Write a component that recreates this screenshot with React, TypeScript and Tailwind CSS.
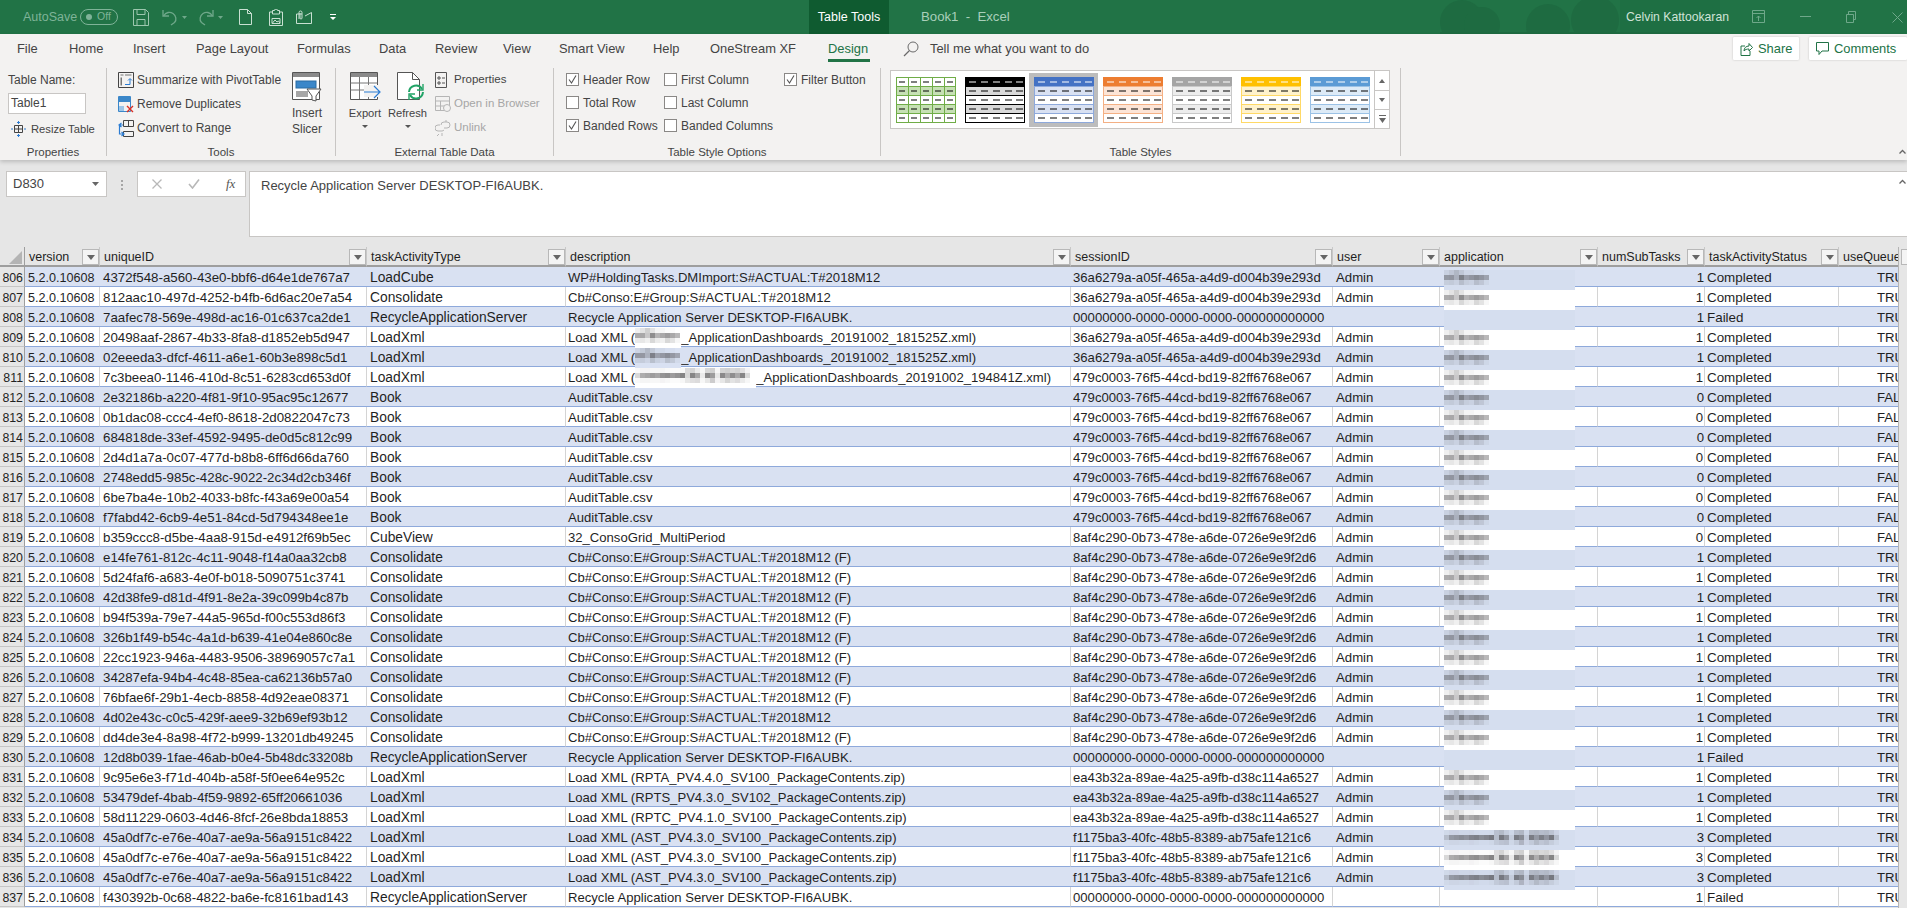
import React from "react";

const COLS = "grid grid-cols-[25px_75px_267px_199px_505px_262px_107px_158px_107px_134px_60px]";

type R = [number, string, string, string];
const RS = "RecycleApplicationServer";
const RD = "Recycle Application Server DESKTOP-FI6AUBK.";
const CF = "Cb#Conso:E#Group:S#ACTUAL:T#2018M12 (F)";
const CN = "Cb#Conso:E#Group:S#ACTUAL:T#2018M12";
const rows: R[] = [
  [806, "4372f548-a560-43e0-bbf6-d64e1de767a7", "LoadCube", "WP#HoldingTasks.DMImport:S#ACTUAL:T#2018M12"],
  [807, "812aac10-497d-4252-b4fb-6d6ac20e7a54", "Consolidate", CN],
  [808, "7aafec78-569e-498d-ac16-01c637ca2de1", RS, RD],
  [809, "20498aaf-2867-4b33-8fa8-d1852eb5d947", "LoadXml", "@S_ApplicationDashboards_20191002_181525Z.xml)"],
  [810, "02eeeda3-dfcf-4611-a6e1-60b3e898c5d1", "LoadXml", "@S_ApplicationDashboards_20191002_181525Z.xml)"],
  [811, "7c3beea0-1146-410d-8c51-6283cd653d0f", "LoadXml", "@L_ApplicationDashboards_20191002_194841Z.xml)"],
  [812, "2e32186b-a220-4f81-9f10-95ac95c12677", "Book", "AuditTable.csv"],
  [813, "0b1dac08-ccc4-4ef0-8618-2d0822047c73", "Book", "AuditTable.csv"],
  [814, "684818de-33ef-4592-9495-de0d5c812c99", "Book", "AuditTable.csv"],
  [815, "2d4d1a7a-0c07-477d-b8b8-6ff6d66da760", "Book", "AuditTable.csv"],
  [816, "2748edd5-985c-428c-9022-2c34d2cb346f", "Book", "AuditTable.csv"],
  [817, "6be7ba4e-10b2-4033-b8fc-f43a69e00a54", "Book", "AuditTable.csv"],
  [818, "f7fabd42-6cb9-4e51-84cd-5d794348ee1e", "Book", "AuditTable.csv"],
  [819, "b359ccc8-d5be-4aa8-915d-e4912f69b5ec", "CubeView", "32_ConsoGrid_MultiPeriod"],
  [820, "e14fe761-812c-4c11-9048-f14a0aa32cb8", "Consolidate", CF],
  [821, "5d24faf6-a683-4e0f-b018-5090751c3741", "Consolidate", CF],
  [822, "42d38fe9-d81d-4f91-8e2a-39c099b4c87b", "Consolidate", CF],
  [823, "b94f539a-79e7-44a5-965d-f00c553d86f3", "Consolidate", CF],
  [824, "326b1f49-b54c-4a1d-b639-41e04e860c8e", "Consolidate", CF],
  [825, "22cc1923-946a-4483-9506-38969057c7a1", "Consolidate", CF],
  [826, "34287efa-94b4-4c48-85ea-ca62136b57a0", "Consolidate", CF],
  [827, "76bfae6f-29b1-4ecb-8858-4d92eae08371", "Consolidate", CF],
  [828, "4d02e43c-c0c5-429f-aee9-32b69ef93b12", "Consolidate", CN],
  [829, "dd4de3e4-8a98-4f72-b999-13201db49245", "Consolidate", CF],
  [830, "12d8b039-1fae-46ab-b0e4-5b48dc33208b", RS, RD],
  [831, "9c95e6e3-f71d-404b-a58f-5f0ee64e952c", "LoadXml", "Load XML (RPTA_PV4.4.0_SV100_PackageContents.zip)"],
  [832, "53479def-4bab-4f59-9892-65ff20661036", "LoadXml", "Load XML (RPTS_PV4.3.0_SV102_PackageContents.zip)"],
  [833, "58d11229-0603-4d46-8fcf-26e8bda18853", "LoadXml", "Load XML (RPTC_PV4.1.0_SV100_PackageContents.zip)"],
  [834, "45a0df7c-e76e-40a7-ae9a-56a9151c8422", "LoadXml", "Load XML (AST_PV4.3.0_SV100_PackageContents.zip)"],
  [835, "45a0df7c-e76e-40a7-ae9a-56a9151c8422", "LoadXml", "Load XML (AST_PV4.3.0_SV100_PackageContents.zip)"],
  [836, "45a0df7c-e76e-40a7-ae9a-56a9151c8422", "LoadXml", "Load XML (AST_PV4.3.0_SV100_PackageContents.zip)"],
  [837, "f430392b-0c68-4822-ba6e-fc8161bad143", RS, RD],
];

function session(n: number) {
  if (n === 808 || n === 830 || n === 837) return "00000000-0000-0000-0000-000000000000";
  if (n <= 810) return "36a6279a-a05f-465a-a4d9-d004b39e293d";
  if (n <= 818) return "479c0003-76f5-44cd-bd19-82ff6768e067";
  if (n <= 829) return "8af4c290-0b73-478e-a6de-0726e9e9f2d6";
  if (n <= 833) return "ea43b32a-89ae-4a25-a9fb-d38c114a6527";
  return "f1175ba3-40fc-48b5-8389-ab75afe121c6";
}

const SHORT = [
  [0.08, 0.14, 0.24, 0.14, 0.05, 0.05, 0.02, 0.02, 0.0],
  [0.42, 0.44, 0.28, 0.58, 0.38, 0.44, 0.5, 0.44, 0.36],
  [0.1, 0.12, 0.08, 0.2, 0.1, 0.08, 0.2, 0.14, 0.04],
];
const LONG = [
  [0.03, 0.06, 0.06, 0.04, 0.04, 0.05, 0.03, 0.02, 0.02, 0.03, 0.18, 0.22, 0.1, 0.04, 0.2, 0.24, 0.04, 0.22, 0.24, 0.2, 0.22, 0.16, 0.06],
  [0.2, 0.42, 0.46, 0.5, 0.46, 0.55, 0.58, 0.5, 0.55, 0.62, 0.2, 0.62, 0.45, 0.1, 0.6, 0.5, 0.12, 0.6, 0.42, 0.58, 0.44, 0.62, 0.2],
  [0.03, 0.05, 0.05, 0.04, 0.04, 0.06, 0.04, 0.02, 0.02, 0.04, 0.12, 0.16, 0.18, 0.04, 0.12, 0.26, 0.06, 0.12, 0.22, 0.14, 0.18, 0.1, 0.04],
];

function Mosaic({ data }: { data: number[][] }) {
  const w = data[0].length * 5;
  return (
    <svg width={w} height={15} className="block">
      {data.map((r, y) =>
        r.map((o, x) => (
          <rect key={x + "-" + y} x={x * 5} y={y * 5} width={5} height={5} fill="#3c3a3c" fillOpacity={o} />
        ))
      )}
    </svg>
  );
}

function DescCell({ text, band }: { text: string; band: boolean }) {
  const bg = band ? "bg-[#d9e1f2]" : "bg-white";
  if (text.startsWith("@")) {
    const long = text[1] === "L";
    return (
      <span className="whitespace-nowrap">
        Load XML (
        <span className={long ? "relative inline-block w-[121px] h-[1px]" : "relative inline-block w-[46px] h-[1px]"}>
          <span className={(long ? "w-[121px] " : "w-[46px] ") + bg + " absolute left-0 top-[-13px] h-[20px] z-10 overflow-hidden"}>
            <Mosaic data={long ? LONG.map((r) => r.slice(0, 23)) : SHORT.map((r) => r.slice(0, 9))} />
          </span>
        </span>
        {text.slice(2)}
      </span>
    );
  }
  return <span className="whitespace-nowrap">{text}</span>;
}

function Row({ r, i }: { r: R; i: number }) {
  const [n, id, type, desc] = r;
  const band = i % 2 === 0;
  const noUser = n === 808 || n === 830 || n === 837;
  const long = n >= 834 && n <= 836;
  const sub = n >= 834 && n <= 836 ? 3 : n >= 812 && n <= 819 ? 0 : 1;
  const status = noUser ? "Failed" : "Completed";
  const q = n >= 812 && n <= 819 ? "FALSE" : "TRUE";
  const bg = band ? "bg-[#d9e1f2]" : "bg-white";
  const cell = "h-[20px] overflow-hidden whitespace-nowrap leading-[22px] border-b border-b-[#8ea9db] " + bg + (band ? "" : " border-r border-r-[#d4d4d4]");
  return (
    <div className={COLS + " h-[20px]"}>
      <div className="h-[20px] bg-[#e6e6e6] border-r border-r-[#9e9e9e] border-b border-b-[#c6c6c6] text-right pr-[1px] leading-[22px] overflow-hidden text-[12.35px] text-[#222]">{n}</div>
      <div className={cell + " pl-[3px] text-[12.6px]"}>5.2.0.10608</div>
      <div className={cell + " pl-[3px] text-[13.3px]"}>{id}</div>
      <div className={cell + " pl-[3px] text-[13.8px]"}>{type}</div>
      <div className={"h-[20px] whitespace-nowrap leading-[22px] text-[13.1px] border-b border-b-[#8ea9db] pl-[2px] " + bg + (band ? "" : " border-r border-r-[#d4d4d4]")}>
        <DescCell text={desc} band={band} />
      </div>
      <div className={cell + " pl-[2px] text-[13.15px]"}>{session(n)}</div>
      <div className={cell + " pl-[3px] text-[13.2px]"}>{noUser ? "" : "Admin"}</div>
      <div className={"relative h-[20px] border-b border-b-[#8ea9db] " + bg + (band ? "" : " border-r border-r-[#d4d4d4]")}>
        {n !== 837 && (
          <div className={"absolute left-[4px] top-[3px] h-[20px] w-[131px] z-10 " + (band ? "bg-[#d5deef]" : "bg-white")}>
            {!noUser && <Mosaic data={long ? LONG : SHORT} />}
          </div>
        )}
      </div>
      <div className={cell + " text-right pr-[1px] text-[13.2px]"}>{sub}</div>
      <div className={cell + " pl-[2px] text-[13.4px]"}>{status}</div>
      <div className={"h-[20px] overflow-hidden whitespace-nowrap leading-[22px] text-[13.2px] border-b border-b-[#8ea9db] pl-[38px] " + bg}>{q}</div>
    </div>
  );
}

function HeaderCell({ label }: { label: string }) {
  return (
    <div className="relative h-[20px] overflow-hidden pl-[4px] leading-[20px] border-r border-r-[#c8c8c8] border-b-2 border-b-[#9e9e9e] whitespace-nowrap">
      {label}
      <span className="absolute right-0 top-[2px] w-[17px] h-[16px] bg-[#f4f4f4] border border-[#b8b8b8] flex items-center justify-center">
        <svg width="8" height="5" viewBox="0 0 8 5"><path d="M0 0h8L4 5z" fill="#666" /></svg>
      </span>
    </div>
  );
}

function TitleIcons() {
  const c = "#9cc7ae";
  return (
    <div className="flex items-center">
      <svg className="ml-[15px]" width="16" height="17" viewBox="0 0 16 17" fill="none" stroke={c}><path d="M.5.5h12l3 3v13H.5z" /><path d="M4 .5v5h8v-5M4 16.5v-6h8v6" /></svg>
      <svg className="ml-[13px]" width="16" height="17" viewBox="0 0 16 17" fill="none" stroke="#6fa88a" strokeWidth="1.3"><path d="M1 1v6h6" /><path d="M1.5 7C4 3 8 2.5 11 4.5s4 6.5 1.5 9L9 16" /></svg>
      <svg className="ml-[4px]" width="5" height="3" viewBox="0 0 5 3"><path d="M0 0h5L2.500 3z" fill="#6fa88a" /></svg>
      <svg className="ml-[11px]" width="16" height="17" viewBox="0 0 16 17" fill="none" stroke="#6fa88a" strokeWidth="1.3"><path d="M15 1v6H9" /><path d="M14.500 7C12 3 8 2.500 5 4.500S1 11 3.500 13.500L7 16" /></svg>
      <svg className="ml-[4px]" width="5" height="3" viewBox="0 0 5 3"><path d="M0 0h5L2.500 3z" fill="#6fa88a" /></svg>
      <svg className="ml-[16px]" width="13" height="16" viewBox="0 0 13 16" fill="none" stroke="#c9e0d2"><path d="M.5.5h8l4 4v11H.5z" /><path d="M8.500.5v4h4" /></svg>
      <svg className="ml-[16px]" width="16" height="17" viewBox="0 0 16 17" fill="none" stroke="#c9e0d2"><path d="M4 3H1.500v13.500h13V3H12" /><path d="M4.500 1.500h2a1.500 1.500 0 0 1 3 0h2V5h-7z" /><path d="M4 9.500h8v5H4zM4.500 14l2.500-3 2 2 1.500-1 1.500 2" /></svg>
      <svg className="ml-[12px]" width="16" height="15" viewBox="0 0 16 15" fill="none" stroke="#c9e0d2"><path d="M6 4H.5v9.500h15v-11L9 6" /><path d="M3 9V2.500a1.500 1.500 0 0 1 3 0V8a1 1 0 0 1-2 0V3" /></svg>
      <svg className="ml-[18px]" width="6" height="6" viewBox="0 0 6 6" fill="#fff"><path d="M0 0h6v1H0zM0 3h6L3 6z" /></svg>
    </div>
  );
}

function TitleBar() {
  const c = "#6fa88a";
  return (
    <div className="relative h-[34px] bg-[#217346] flex items-center text-[12.5px] overflow-hidden shrink-0">
      <svg className="absolute left-[1430px] top-0" width="290" height="34" viewBox="0 0 290 34" fill="#1e6b41">
        <circle cx="32" cy="22" r="22" /><circle cx="52" cy="25" r="18" /><circle cx="118" cy="26" r="22" /><circle cx="165" cy="20" r="24" /><rect x="190" y="0" width="100" height="34" fillOpacity=".55" /><rect x="10" y="32" width="280" height="2" />
      </svg>
      <span className="ml-[23px] w-[57px] text-[#7fb398]">AutoSave</span>
      <span className="w-[38px] h-[16px] rounded-full border border-[#7fb398] flex items-center pl-[5px] text-[10.5px] text-[#7fb398]">
        <span className="w-[6px] h-[6px] rounded-full bg-[#7fb398] mr-[5px]" />Off
      </span>
      <TitleIcons />
      <div className="absolute left-[809px] top-0 w-[80px] h-[34px] bg-[#0f5b30] flex items-center justify-center text-white text-[12.5px]">Table Tools</div>
      <div className="absolute left-[921px] top-0 h-[34px] leading-[33px] text-[13.2px] text-[#a9cfba]">Book1 &nbsp;-&nbsp; Excel</div>
      <div className="absolute left-[1626px] top-0 h-[34px] leading-[34px] text-[12.2px] text-[#cfe3d7]">Celvin Kattookaran</div>
      <svg className="absolute left-[1752px] top-[10px]" width="14" height="14" viewBox="0 0 14 14" fill="none" stroke={c}><path d="M.5.5h12v12H.5zM.5 3.500h12M6.500 11V6M4.500 8l2-2 2 2" /></svg>
      <svg className="absolute left-[1800px] top-[16px]" width="11" height="2"><rect width="11" height="1" fill={c} /></svg>
      <svg className="absolute left-[1846px] top-[11px]" width="10" height="12" viewBox="0 0 10 12" fill="none" stroke={c}><path d="M.5 3.500h7v8h-7zM2.500 3V.5h7v8H8" /></svg>
      <svg className="absolute left-[1892px] top-[12px]" width="11" height="11" viewBox="0 0 11 11" stroke={c}><path d="M.5.5l10 10M10.500.5l-10 10" /></svg>
    </div>
  );
}

function Tabs() {
  const t = "shrink-0 ";
  return (
    <div className="relative h-[28px] pt-[2px] flex items-center pl-[17px] text-[12.9px] text-[#444]">
      <span className={t + "w-[52px]"}>File</span>
      <span className={t + "w-[64px]"}>Home</span>
      <span className={t + "w-[63px]"}>Insert</span>
      <span className={t + "w-[101px]"}>Page Layout</span>
      <span className={t + "w-[82px]"}>Formulas</span>
      <span className={t + "w-[56px]"}>Data</span>
      <span className={t + "w-[68px]"}>Review</span>
      <span className={t + "w-[56px]"}>View</span>
      <span className={t + "w-[94px]"}>Smart View</span>
      <span className={t + "w-[57px]"}>Help</span>
      <span className={t + "w-[118px]"}>OneStream XF</span>
      <span className={t + "w-[75px] relative h-[26px] leading-[26px] text-[#217346]"}>
        Design
        <span className="absolute left-0 bottom-0 w-[42px] h-[3px] bg-[#217346]" />
      </span>
      <svg className="shrink-0" width="16" height="16" viewBox="0 0 16 16" fill="none" stroke="#6a6a6a"><circle cx="10" cy="6" r="5" /><path d="M6.500 9.500L1 15" strokeWidth="1.3" /></svg>
      <span className="ml-[11px]">Tell me what you want to do</span>
      <div className="absolute left-[1733px] top-[3px] w-[66px] h-[23px] bg-white shadow-[0_0_2px_#bbb] flex items-center text-[#217346] rounded-[1px]">
        <svg className="ml-[7px]" width="13" height="14" viewBox="0 0 13 14" fill="none" stroke="#217346"><path d="M5 4H1v9.500h9V9" /><path d="M4 9c0-3 2-5 5-5V1.500l3.500 4-3.500 3.500V7c-2 0-4 .5-5 2z" /></svg>
        <span className="ml-[5px]">Share</span>
      </div>
      <div className="absolute left-[1809px] top-[3px] w-[98px] h-[23px] bg-white shadow-[0_0_2px_#bbb] flex items-center text-[#217346] rounded-[1px]">
        <svg className="ml-[7px]" width="13" height="13" viewBox="0 0 13 13" fill="none" stroke="#217346"><path d="M.5.5h12v8.500H6L3 12.500V9H.5z" /></svg>
        <span className="ml-[5px]">Comments</span>
      </div>
    </div>
  );
}

function Group({ w, label, children }: { w: string; label: string; children: React.ReactNode }) {
  return (
    <div className={w + " shrink-0 h-[88px] border-r border-r-[#c8c6c4] flex flex-col"}>
      <div className="h-[76px] shrink-0">{children}</div>
      <div className="h-[16px] leading-[16px] text-center text-[11.5px] text-[#444]">{label}</div>
    </div>
  );
}

function Item({ icon, text, off, small }: { icon: React.ReactNode; text: string; off?: boolean; small?: boolean }) {
  return (
    <div className={"h-[24px] flex items-center whitespace-nowrap " + (off ? "text-[#a6a6a6]" : "text-[#444]") + (small ? " text-[11.5px]" : "")}>
      <span className="w-[19px] shrink-0 flex items-center">{icon}</span>
      {text}
    </div>
  );
}

function Check({ on, label }: { on?: boolean; label: string }) {
  return (
    <div className="h-[23px] flex items-center whitespace-nowrap text-[#444]">
      <span className="w-[13px] h-[13px] bg-white border border-[#8a8886] flex items-center justify-center mr-[4px] shrink-0">
        {on && <svg width="9" height="9" viewBox="0 0 9 9" fill="none" stroke="#555" strokeWidth="1.1"><path d="M1 4.500l2.500 3.500L8 .5" /></svg>}
      </span>
      {label}
    </div>
  );
}

function Thumb({ border, head, alt, vertical }: { border: string; head: string; alt: string; vertical?: boolean }) {
  const rowsY = [0, 9, 18, 27, 36];
  return (
    <svg width="60" height="46" viewBox="0 0 60 46" className="block">
      {rowsY.map((y, i) => (
        <g key={i}>
          <rect x="0.5" y={y + 0.5} width="59" height="9" fill={i === 0 ? head : i % 2 === 1 ? alt : "#fff"} stroke={i === 0 && !vertical ? head : border} />
          {(vertical ? [4, 16, 28, 40, 52] : [5, 17, 29, 41, 52]).map((x) => (
            <rect key={x} x={x - 1} y={y + 4.5} width={vertical ? 6 : 7} height="1" fill={i === 0 && !vertical ? "#fff" : "#000"} />
          ))}
          {vertical && [12, 24, 36, 48].map((x) => <rect key={x} x={x} y={y} width="1" height="9" fill={border} />)}
        </g>
      ))}
    </svg>
  );
}

const thumbs = [
  { border: "#70ad47", head: "#fff", alt: "#c6e0b4", vertical: true },
  { border: "#000", head: "#000", alt: "#d9d9d9" },
  { border: "#8ea9db", head: "#4472c4", alt: "#d9e1f2", sel: true },
  { border: "#f4b084", head: "#ed7d31", alt: "#fce4d6" },
  { border: "#c9c9c9", head: "#a5a5a5", alt: "#ededed" },
  { border: "#ffd966", head: "#ffc000", alt: "#fff2cc" },
  { border: "#9bc2e6", head: "#5b9bd5", alt: "#ddebf7" },
];

function Gallery() {
  return (
    <div className="ml-[9px] mt-[2px] flex h-[59px]">
      <div className="w-[485px] h-[59px] bg-white border border-[#c8c6c4] pt-[2px] flex">
        {thumbs.map((t, i) => (
          <div key={i} className={"w-[69px] h-[54px] pl-[5px] pt-[4px] " + (t.sel ? "bg-[#bdbdbd]" : "")}>
            <Thumb border={t.border} head={t.head} alt={t.alt} vertical={t.vertical} />
          </div>
        ))}
      </div>
      <div className="w-[15px] h-[59px] border border-l-0 border-[#c8c6c4] bg-white flex flex-col">
        <div className="h-[20px] flex items-center justify-center border-b border-b-[#c8c6c4]"><svg width="6" height="4" viewBox="0 0 6 4"><path d="M3 0l3 4H0z" fill="#666" /></svg></div>
        <div className="h-[19px] flex items-center justify-center border-b border-b-[#c8c6c4]"><svg width="6" height="4" viewBox="0 0 6 4"><path d="M0 0h6L3 4z" fill="#666" /></svg></div>
        <div className="flex-1 flex items-center justify-center"><svg width="7" height="8" viewBox="0 0 7 8"><path d="M0 0h7v1H0zM0 3h7L3.500 8z" fill="#666" /></svg></div>
      </div>
    </div>
  );
}

function Ribbon() {
  return (
    <div className="relative z-20 h-[126px] shrink-0 bg-[#f3f2f1] shadow-[0_2px_4px_rgba(0,0,0,0.18)] text-[12px]">
      <Tabs />
      <div className="flex mt-[6px]">
        <Group w="w-[107px]" label="Properties">
          <div className="pl-[8px] text-[#444]">
            <div className="h-[24px] leading-[24px]">Table Name:</div>
            <div className="h-[24px]">
              <div className="w-[78px] h-[21px] mt-[1px] bg-white border border-[#c8c6c4] pl-[2px] leading-[19px]">Table1</div>
            </div>
            <div className="h-[24px] flex items-center pl-[3px] text-[11.2px]">
              <svg width="15" height="16" viewBox="0 0 15 16" fill="none" stroke="#444"><path d="M3.500 4.500h8v7h-8zM3.500 8h8M7.500 4.500v7" /><path d="M7.500 0v3M6 1.500h3M7.500 13v3M6 14.500h3M0 8h2M13 8h2" stroke="#2b7cd3" /></svg>
              <span className="ml-[5px]">Resize Table</span>
            </div>
          </div>
        </Group>
        <Group w="w-[229px]" label="Tools">
          <div className="flex pl-[11px]">
            <div className="w-[172px]">
              <Item text="Summarize with PivotTable" icon={<svg width="16" height="16" viewBox="0 0 16 16" fill="none"><path d="M.5.5h15v15H.5z" stroke="#444" /><path d="M2.500 2.500h3v1h-3zM7 2.500h6.500v1H7zM2.500 5.500h1.500v8H2.500z" fill="#777" /><path d="M7 12.500h5V7M10 8.500L12 6.500l2 2" stroke="#2b7cd3" /></svg>} />
              <Item text="Remove Duplicates" icon={<svg width="16" height="17" viewBox="0 0 16 17" fill="none"><path d="M.5.5h12v15H.5z" stroke="#3b87c9" /><path d="M1 1h11v5H1z" fill="#3b87c9" /><path d="M1 10h5v5H1z" fill="#9cc5e8" /><path d="M9 10l6 6M15 10l-6 6" stroke="#d93025" strokeWidth="1.4" /></svg>} />
              <Item text="Convert to Range" icon={<svg width="16" height="17" viewBox="0 0 16 17" fill="none"><path d="M5.500.5h10v6h-10zM10.500.5v6M5.500 11.500h10v5h-10z" stroke="#444" /><path d="M5 5H1.500v9H5M3.500 3L1 5l2.500 2M3.500 12L6 14l-2.500 2" stroke="#2b7cd3" strokeWidth="1.2" /></svg>} />
            </div>
            <div className="w-[34px] flex flex-col items-center text-[#444]">
              <svg className="mt-[4px]" width="30" height="30" viewBox="0 0 30 30" fill="none"><path d="M.5.5h27v27H.5z" fill="#fff" stroke="#555" /><rect x="1" y="1" width="26" height="4" fill="#8a8a8a" /><rect x="4" y="9" width="20" height="7" fill="#3b87c9" stroke="#2b6ca3" /><rect x="4" y="19" width="12" height="6" fill="#a6a6a6" /><path d="M15 17h14l-5 7v5l-4-1v-4z" fill="#fff" stroke="#555" /></svg>
              <div className="mt-[3px] leading-[16px]">Insert</div>
              <div className="leading-[16px]">Slicer</div>
            </div>
          </div>
        </Group>
        <Group w="w-[218px]" label="External Table Data">
          <div className="flex pl-[4px] text-[#444] text-[11.2px]">
            <div className="w-[50px] flex flex-col items-center">
              <svg className="mt-[4px]" width="31" height="30" viewBox="0 0 31 30" fill="none"><path d="M.5.5h27v27H.5z" fill="#fff" stroke="#555" /><rect x="1" y="1" width="26" height="4" fill="#8a8a8a" /><path d="M.5 11h27M.5 18h27M9.500 5v22M18.500 5v22" stroke="#777" /><rect x="14" y="13" width="17" height="12" fill="#f3f2f1" /><path d="M14 20h15M24 14l6 6-6 6" stroke="#2b7cd3" strokeWidth="1.2" /></svg>
              <div className="mt-[3px] leading-[16px]">Export</div>
              <svg className="mt-[4px]" width="6" height="3" viewBox="0 0 6 3"><path d="M0 0h6L3 3z" fill="#555" /></svg>
            </div>
            <div className="w-[35px] flex flex-col items-center">
              <svg className="mt-[4px] ml-[6px]" width="28" height="30" viewBox="0 0 28 30" fill="none"><path d="M.5.5h15l7 7v20H.5z" fill="#fff" stroke="#555" /><path d="M15.500.5v7h7" stroke="#555" /><path d="M12 20a7 7 0 0 1 13-3M26 20a7 7 0 0 1-13 3" stroke="#21a366" strokeWidth="2" /><path d="M26 12v6h-6M12 28v-6h6" stroke="#21a366" strokeWidth="1.4" /></svg>
              <div className="mt-[3px] leading-[16px]">Refresh</div>
              <svg className="mt-[4px]" width="6" height="3" viewBox="0 0 6 3"><path d="M0 0h6L3 3z" fill="#555" /></svg>
            </div>
            <div className="ml-[10px] flex-1">
              <Item small text="Properties" icon={<svg width="12" height="16" viewBox="0 0 12 16" fill="none" stroke="#555"><path d="M.5.5h11v15H.5zM3 5h2v2H3zM7 6h3M3 10h2v2H3zM7 11h3" /></svg>} />
              <Item small off text="Open in Browser" icon={<svg width="16" height="16" viewBox="0 0 16 16" fill="none" stroke="#b5b5b5"><path d="M.5.5h14v14H.5zM.5 5h14M5.500 5v9M.5 10h14" /><circle cx="12" cy="12" r="3.500" fill="#f3f2f1" /></svg>} />
              <Item small off text="Unlink" icon={<svg width="16" height="16" viewBox="0 0 16 16" fill="none" stroke="#b5b5b5"><path d="M5 5H3a3 3 0 0 0 0 6h4a3 3 0 0 0 2-1M9 8h3a3 3 0 0 0 0-6H9a3 3 0 0 0-3 3M4 14l-2 2M7 13v3M11 0v2" /></svg>} />
            </div>
          </div>
        </Group>
        <Group w="w-[327px]" label="Table Style Options">
          <div className="flex pl-[12px]">
            <div className="w-[98px]"><Check on label="Header Row" /><Check label="Total Row" /><Check on label="Banded Rows" /></div>
            <div className="w-[120px]"><Check label="First Column" /><Check label="Last Column" /><Check label="Banded Columns" /></div>
            <div><Check on label="Filter Button" /></div>
          </div>
        </Group>
        <Group w="w-[520px]" label="Table Styles"><Gallery /></Group>
      </div>
      <svg className="absolute right-[1px] bottom-[6px]" width="7" height="5" viewBox="0 0 7 5" fill="none" stroke="#666" strokeWidth="1.3"><path d="M.5 4.500l3-3 3 3" /></svg>
    </div>
  );
}

function FormulaBar() {
  return (
    <div className="h-[87px] shrink-0 pt-[11px] flex items-start bg-[#e6e6e6] text-[13px] text-[#444]">
      <div className="ml-[6px] w-[101px] h-[26px] bg-white border border-[#c8c6c4] flex items-center pl-[6px] pr-[7px] justify-between">
        D830
        <svg width="7" height="4" viewBox="0 0 7 4"><path d="M0 0h7L3.500 4z" fill="#666" /></svg>
      </div>
      <svg className="ml-[14px] mt-[9px]" width="3" height="11" viewBox="0 0 3 11" fill="#a6a6a6"><rect width="2" height="2" /><rect y="4" width="2" height="2" /><rect y="8" width="2" height="2" /></svg>
      <div className="ml-[13px] w-[109px] h-[26px] bg-white border border-[#c8c6c4] flex items-center pl-[14px]">
        <svg width="10" height="10" viewBox="0 0 10 10" stroke="#b8b8b8" strokeWidth="1.3"><path d="M.5.5l9 9M9.500.5l-9 9" /></svg>
        <svg className="ml-[26px]" width="12" height="10" viewBox="0 0 12 10" fill="none" stroke="#b8b8b8" strokeWidth="1.6"><path d="M1 5l3.500 4L11 .5" /></svg>
        <span className="ml-[26px] font-['Liberation_Serif',serif] italic text-[13px] text-[#555]">fx</span>
      </div>
      <div className="ml-[3px] flex-1 h-[66px] bg-white border border-[#c8c6c4] border-r-0 pl-[11px] pt-[4px] leading-[19px] relative">
        Recycle Application Server DESKTOP-FI6AUBK.
        <svg className="absolute right-[1px] top-[7px]" width="7" height="5" viewBox="0 0 7 5" fill="none" stroke="#666" strokeWidth="1.3"><path d="M.5 4.500l3-3 3 3" /></svg>
      </div>
    </div>
  );
}

function Sheet() {
  const heads = ["version", "uniqueID", "taskActivityType", "description", "sessionID", "user", "application", "numSubTasks", "taskActivityStatus"];
  return (
    <div className="flex-1 flex overflow-hidden bg-[#e6e6e6] text-[12.5px] text-[#1f1f1f]">
      <div className="w-[1899px] shrink-0 border-r border-r-[#b4b4b4] overflow-hidden">
        <div className={COLS + " h-[20px]"}>
          <div className="h-[20px] border-r border-r-[#9e9e9e] border-b-2 border-b-[#9e9e9e] flex items-end justify-end pr-[2px] pb-[1px]">
            <svg width="13" height="13" viewBox="0 0 13 13"><path d="M13 0v13H0z" fill="#b4b4b4" /></svg>
          </div>
          {heads.map((h) => <HeaderCell key={h} label={h} />)}
          <div className="relative h-[20px] overflow-hidden pl-[4px] leading-[20px] border-b-2 border-b-[#9e9e9e] whitespace-nowrap">useQueue</div>
        </div>
        {rows.map((r, i) => <Row key={r[0]} r={r} i={i} />)}
      </div>
      <div className="h-[20px] flex-1 pl-[2px] pt-[2px]">
        <span className="block w-[6px] h-[16px] bg-[#f4f4f4] border border-r-0 border-[#b8b8b8]" />
      </div>
    </div>
  );
}

export default function App() {
  return (
    <div className="w-[1907px] h-[908px] overflow-hidden flex flex-col bg-[#e6e6e6] font-['Liberation_Sans',Arial,sans-serif]">
      <TitleBar />
      <Ribbon />
      <FormulaBar />
      <Sheet />
    </div>
  );
}
